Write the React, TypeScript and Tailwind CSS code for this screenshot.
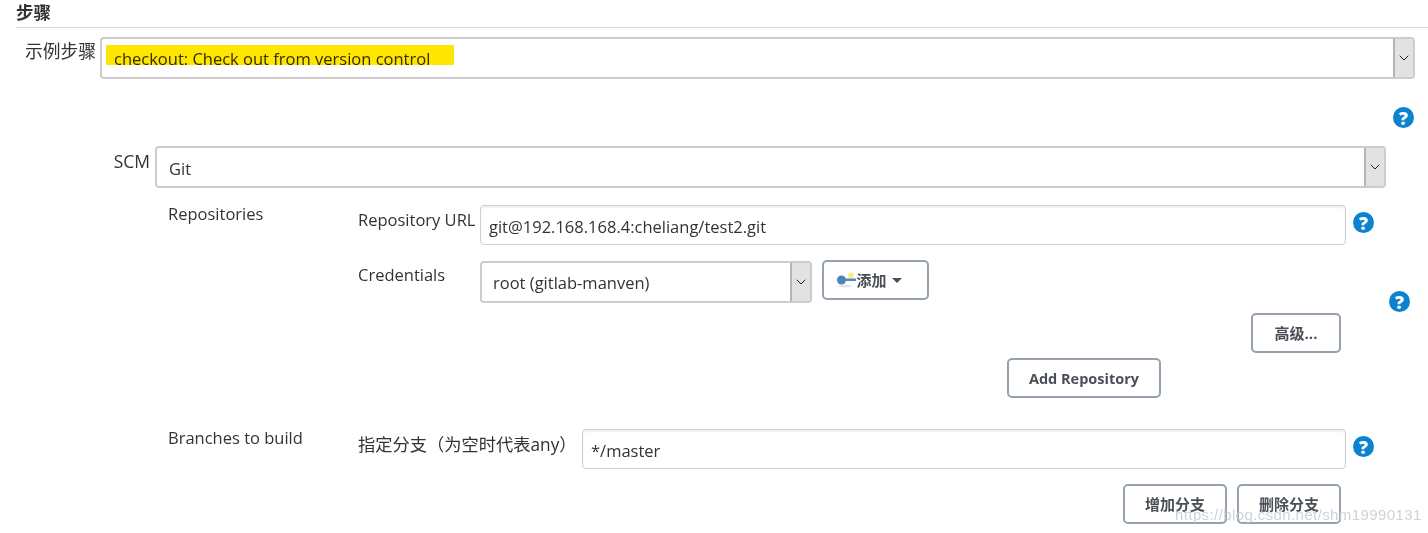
import { ChevronDown } from "lucide-react";

const font = "font-['Open_Sans','Noto_Sans_CJK_SC',sans-serif]";

function Help({ className = "" }: { className?: string }) {
  return (
    <span
      className={`flex h-[21px] w-[21px] shrink-0 items-center justify-center rounded-full bg-[#0b83d0] text-[18px] leading-none font-extrabold text-white ${className}`}
    >
      ?
    </span>
  );
}

function SelectBox({ value, className = "", pad = "pl-[12px] pt-[2px]" }: { value: string; className?: string; pad?: string }) {
  return (
    <div
      className={`flex items-stretch rounded-[4px] border-2 border-[#cccccc] bg-white text-[16.5px] text-[#333] ${className}`}
    >
      <div className={`flex flex-1 items-center ${pad}`}>{value}</div>
      <div className="flex w-[20px] items-center justify-center border-l-2 border-[#b4b4b4] bg-[#e2e2e2]">
        <ChevronDown className="h-[16px] w-[16px] text-[#222]" strokeWidth={1.5} />
      </div>
    </div>
  );
}

function Input({ value, className = "" }: { value: string; className?: string }) {
  return (
    <div
      className={`flex h-[40px] items-center rounded-[4px] border border-[#cfcfcf] bg-white pt-[4px] pl-[8px] text-[16.5px] text-[#333] shadow-[inset_0_2px_2px_rgba(0,0,0,0.06)] ${className}`}
    >
      {value}
    </div>
  );
}

function Btn({ children, className = "" }: { children: React.ReactNode; className?: string }) {
  return (
    <button
      className={`flex h-[40px] items-center justify-center rounded-[5px] border-2 border-[#95a2ad] bg-white text-[14.5px] font-bold text-[#4a4f57] ${className}`}
    >
      {children}
    </button>
  );
}

export default function App() {
  return (
    <div className={`relative h-[533px] w-[1428px] overflow-hidden bg-white ${font}`}>
      <div className="ml-4 h-[28px] border-b border-[#dcdcdc] pt-[1px] text-[17.5px] leading-[22px] font-bold text-[#333]">
        步骤
      </div>

      <div className="mt-[9px] flex">
        <div className="w-[96px] pt-[2px] text-right text-[17.75px] leading-[24px] whitespace-nowrap text-[#333]">示例步骤</div>
        <div className="relative ml-[4px] w-[1315px]">
          <SelectBox value="checkout: Check out from version control" className="h-[42px]" />
          {/* marker highlight sits over the select text */}
          <div className="absolute top-[8px] left-[6px] h-[20px] w-[348px] bg-[#ffe600] mix-blend-multiply" />
        </div>
      </div>

      <div className="mt-[28px] flex w-[1414px] justify-end">
        <Help />
      </div>

      <div className="mt-[18px] flex">
        <div className="w-[150px] pt-[3px] text-right text-[17.5px] leading-[24px] text-[#333]">SCM</div>
        <SelectBox value="Git" pad="pl-[12px] pt-[4px]" className="ml-[5px] h-[42px] w-[1231px]" />
      </div>

      <div className="mt-[17px] ml-[168px] flex w-[1242px]">
        <div className="-mt-[1px] w-[190px] text-[16.5px] leading-[20px] text-[#333]">Repositories</div>
        <div className="flex-1">
          <div className="flex items-start">
            <div className="w-[122px] pt-[3px] text-[16.5px] text-[#333]">Repository URL</div>
            <Input value="git@192.168.168.4:cheliang/test2.git" className="w-[866px]" />
            <Help className="mt-[7px] ml-[7px]" />
          </div>
          <div className="mt-[16px] flex items-start">
            <div className="w-[122px] pt-[2px] text-[16.5px] text-[#333]">Credentials</div>
            <SelectBox value="root (gitlab-manven)" pad="pl-[11px] pt-[2px]" className="h-[42px] w-[332px]" />
            <Btn className="mt-[-1px] ml-[10px] w-[107px] pr-[12px]">
              <svg width="19" height="16" viewBox="0 0 19 16" className="shrink-0">
                <ellipse cx="8" cy="14" rx="7" ry="1.5" fill="#e4e4e4" />
                <circle cx="14" cy="3.5" r="3" fill="#f7ef8a" />
                <circle cx="4.5" cy="8" r="4.5" fill="#4f81bd" />
                <rect x="7" y="6.5" width="12" height="2.5" fill="#5a86b8" />
              </svg>
              <span className="text-[15px] font-semibold">添加</span>
              <span className="ml-[5px] h-0 w-0 border-x-[5px] border-t-[5px] border-x-transparent border-t-[#4a4f57]" />
            </Btn>
          </div>
        </div>
      </div>

      <div className="mt-[-12px] ml-[1389px]">
        <Help />
      </div>

      <div className="mt-[1px] flex">
        <Btn className="ml-[1251px] w-[90px] text-[15px]">高级...</Btn>
      </div>
      <div className="mt-[5px] flex">
        <Btn className="ml-[1007px] w-[154px] pt-[1px]">Add Repository</Btn>
      </div>

      <div className="mt-[31px] ml-[168px] flex items-start">
        <div className="-mt-[1px] w-[190px] text-[16.5px] leading-[20px] text-[#333]">Branches to build</div>
        <div className="w-[224px] pt-[3px] text-[17.25px] whitespace-nowrap text-[#333]">指定分支（为空时代表any）</div>
        <Input value="*/master" className="w-[764px]" />
        <Help className="mt-[7px] ml-[7px]" />
      </div>

      <div className="mt-[15px] flex">
        <Btn className="ml-[1123px] w-[104px] text-[15px]">增加分支</Btn>
        <Btn className="ml-[10px] w-[104px] text-[15px]">删除分支</Btn>
      </div>

      {/* blog watermark */}
      <div className="absolute top-[504px] left-[1175px] font-['Liberation_Sans',sans-serif] text-[15px] tracking-[0.4px] whitespace-nowrap text-[#c4c8cc]/80">
        https://blog.csdn.net/shm19990131
      </div>
    </div>
  );
}
